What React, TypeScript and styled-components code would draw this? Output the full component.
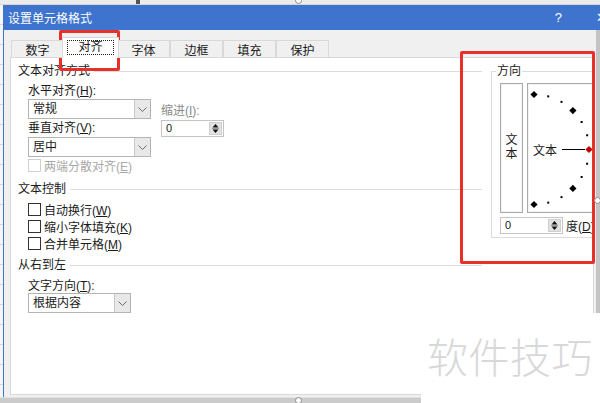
import React from 'react'
import styled, { createGlobalStyle } from 'styled-components'

const GlobalStyle = createGlobalStyle`
  html, body {
    margin: 0;
    padding: 0;
    background: #fff;
  }
  body {
    font-family: "Liberation Sans", "Noto Sans CJK SC", sans-serif;
    font-size: 12px;
    color: #1a1a1a;
  }
  * {
    box-sizing: border-box;
  }
`

const Screen = styled.div`
  position: relative;
  width: 600px;
  height: 403px;
  overflow: hidden;
  display: grid;
  grid-template-columns: 4px 596px;
  grid-template-rows: 5px 392px 6px;
  background: #e4e4e4;
`
const TopStrip = styled.div`
  grid-column: 1 / 3;
  background: linear-gradient(90deg, #ececec 0 136px, #555 136px 140px, #ececec 140px);
  border-bottom: 1px solid #d6d6d6;
`
const LeftStrip = styled.div`
  background: repeating-linear-gradient(180deg, #f6f6f6 0 19px, #d4d4d4 19px 20px);
  border-right: 1px solid #3e74cd;
`
const BottomStrip = styled.div`
  grid-column: 1 / 3;
  background: #cbcbcb;
  border-top: 1px solid #e2e2e2;
`

const Dialog = styled.div`
  display: flex;
  flex-direction: column;
  background: #f0f0f0;
  overflow: hidden;
`
const TitleBar = styled.div`
  height: 25px;
  flex: none;
  display: flex;
  align-items: center;
  padding-left: 4px;
  background: #3e74cd;
  color: #fff;
  font-size: 12px;
`
const Help = styled.span`
  margin-left: auto;
  font-size: 13px;
`
const Close = styled.span`
  margin-left: 34px;
  margin-right: -6px;
  width: 10px;
  font-size: 13px;
`

const Body = styled.div`
  flex: 1;
  display: flex;
  flex-direction: column;
  padding: 8px 2px 2px 6px;
  border-right: 4px solid #c4c4c4;
  min-height: 0;
`
const TabRow = styled.div`
  display: flex;
  align-items: flex-end;
  height: 20px;
  margin: 0 0 -1px 1px;
  position: relative;
  z-index: 1;
`
const Tab = styled.div<{ $active?: boolean }>`
  width: ${p => (p.$active ? '57px' : '53px')};
  height: ${p => (p.$active ? '21px' : '18px')};
  margin: ${p => (p.$active ? '0 -2px' : '0')};
  display: flex;
  align-items: center;
  justify-content: center;
  border: 1px solid #d9d9d9;
  border-bottom: ${p => (p.$active ? 'none' : '1px solid #d9d9d9')};
  background: ${p => (p.$active ? '#fff' : '#f0f0f0')};
  position: relative;
  z-index: ${p => (p.$active ? 2 : 1)};
  padding-bottom: ${p => (p.$active ? '2px' : '0')};
`
const Focus = styled.span`
  border: 1px dotted #222;
  padding: 0 10px;
  line-height: 13px;
`

const Panel = styled.div`
  flex: 1;
  display: grid;
  grid-template-columns: 464px 140px;
  column-gap: 9px;
  align-items: start;
  padding: 6px 0 0 7px;
  background: #fff;
  border: 1px solid #d9d9d9;
  overflow: hidden;
`
const Column = styled.div`
  display: flex;
  flex-direction: column;
`
const GroupHeader = styled.div<{ $gap?: number }>`
  display: flex;
  align-items: center;
  gap: 4px;
  height: 14px;
  line-height: 14px;
  margin-top: ${p => p.$gap ?? 0}px;
  &::after {
    content: '';
    flex: 1;
    height: 1px;
    background: #dcdcdc;
  }
`
const Indent = styled.div<{ $gap?: number }>`
  display: flex;
  flex-direction: column;
  padding-left: 10px;
  margin-top: ${p => p.$gap ?? 0}px;
`
const AlignRow = styled.div`
  display: flex;
  gap: 10px;
`
const Stack = styled.div<{ $top?: number }>`
  display: flex;
  flex-direction: column;
  padding-top: ${p => p.$top ?? 0}px;
`
const Label = styled.div<{ $gap?: number; $muted?: boolean }>`
  height: 14px;
  line-height: 14px;
  margin-top: ${p => p.$gap ?? 0}px;
  color: ${p => (p.$muted ? '#8a8a8a' : '#1a1a1a')};
  white-space: nowrap;
`

const SelectBox = styled.div<{ $w: number; $gap?: number }>`
  width: ${p => p.$w}px;
  height: 20px;
  margin-top: ${p => p.$gap ?? 0}px;
  display: flex;
  border: 1px solid #b4b4b4;
  background: #fff;
`
const SelectValue = styled.span`
  flex: 1;
  padding-left: 4px;
  line-height: 18px;
`
const SelectButton = styled.span`
  width: 16px;
  display: flex;
  align-items: center;
  justify-content: center;
  background: #e8e8e8;
  border-left: 1px solid #c8c8c8;
`

const SpinBox = styled.div<{ $w: number; $gap?: number }>`
  width: ${p => p.$w}px;
  height: 17px;
  margin-top: ${p => p.$gap ?? 0}px;
  display: flex;
  align-items: center;
  border: 1px solid #c4c4c4;
  background: #fff;
  padding: 1px;
`
const SpinValue = styled.span`
  flex: 1;
  padding-left: 3px;
  font-size: 11px;
  line-height: 13px;
`
const SpinButtons = styled.span`
  width: 13px;
  height: 13px;
  display: flex;
  align-items: center;
  justify-content: center;
  background: #e2e2e2;
  border: 1px solid #cfcfcf;
`

const Check = styled.div<{ $disabled?: boolean }>`
  display: flex;
  align-items: center;
  gap: 3px;
  height: 17px;
  color: ${p => (p.$disabled ? '#a8a8a8' : '#1a1a1a')};
  white-space: nowrap;
`
const CheckBox = styled.span<{ $disabled?: boolean }>`
  width: 13px;
  height: 13px;
  border: 1px solid ${p => (p.$disabled ? '#d0d0d0' : '#333')};
  background: #fff;
`

const Fieldset = styled.fieldset`
  margin: 0;
  padding: 5px 0 3px 8px;
  border: 1px solid #dcdcdc;
  min-width: 0;
`
const Legend = styled.legend`
  margin-left: -4px;
  padding: 0 1px;
  line-height: 14px;
  height: 14px;
`
const DialRow = styled.div`
  display: flex;
  gap: 4px;
  height: 130px;
`
const VertBox = styled.div`
  width: 23px;
  display: flex;
  flex-direction: column;
  align-items: center;
  justify-content: center;
  border: 1px solid #a9a9a9;
  box-shadow: inset 0 0 0 1px #f2f2f2;
  line-height: 14px;
  padding-bottom: 2px;
`
const DialBox = styled.div`
  width: 80px;
  border: 1px solid #a9a9a9;
  box-shadow: inset 0 0 0 1px #f2f2f2;
`
const SpinRow = styled.div`
  display: flex;
  align-items: center;
  gap: 3px;
  margin-top: 4px;
  white-space: nowrap;
`

const Highlight = styled.div<{ $x: number; $y: number; $w: number; $h: number }>`
  position: absolute;
  left: ${p => p.$x}px;
  top: ${p => p.$y}px;
  width: ${p => p.$w}px;
  height: ${p => p.$h}px;
  border: 3px solid #e8302a;
  border-radius: 2px;
  pointer-events: none;
`
const Handle = styled.span<{ $x: number; $y: number }>`
  position: absolute;
  left: ${p => p.$x - 3}px;
  top: ${p => p.$y - 3}px;
  width: 7px;
  height: 7px;
  border-radius: 50%;
  border: 1px solid #8a8a8a;
  background: #fff;
`
const Watermark = styled.div`
  position: absolute;
  left: 421px;
  top: 313px;
  right: 0;
  bottom: 0;
  background: #fff;
  padding: 22px 0 0 6px;
  font-family: "Noto Sans CJK SC", sans-serif;
  color: #d8d8d8;
  font-size: 41px;
  line-height: 41px;
  font-weight: 300;
  letter-spacing: 0.5px;
  white-space: nowrap;
`

const Chevron = () => (
  <svg width="9" height="5" viewBox="0 0 9 5">
    <polyline points="0.5,0.5 4.5,4.5 8.5,0.5" fill="none" stroke="#6a6a6a" strokeWidth="1" />
  </svg>
)

const SpinArrows = () => (
  <svg width="7" height="11" viewBox="0 0 7 11">
    <polygon points="3.5,1 6.5,4.5 0.5,4.5" fill="#111" />
    <line x1="0" y1="5.5" x2="7" y2="5.5" stroke="#9a9a9a" strokeWidth="1" />
    <polygon points="0.5,6.5 6.5,6.5 3.5,10" fill="#111" />
  </svg>
)

const Dial = () => {
  const cx = 6
  const cy = 65.5
  const r = 55
  const marks = []
  for (let a = -90; a <= 90; a += 15) {
    const rad = (a * Math.PI) / 180
    const x = cx + r * Math.cos(rad)
    const y = cy - r * Math.sin(rad)
    if (a % 45 === 0) {
      const s = 3.6
      marks.push(
        <polygon
          key={a}
          points={`${x},${y - s} ${x + s},${y} ${x},${y + s} ${x - s},${y}`}
          fill={a === 0 ? '#c00000' : '#000'}
        />
      )
    } else {
      marks.push(<rect key={a} x={x - 1} y={y - 1} width="2" height="2" fill="#000" />)
    }
  }
  return (
    <svg width="78" height="128" viewBox="0 0 78 128">
      {marks}
      <text
        x="5"
        y={cy}
        dominantBaseline="central"
        fontFamily='"Noto Sans CJK SC", sans-serif'
        fontSize="12"
        fill="#1a1a1a"
      >
        文本
      </text>
      <line x1="34" y1={cy} x2="57" y2={cy} stroke="#000" strokeWidth="1" />
    </svg>
  )
}

const Select = ({ value, width, gap }: { value: string; width: number; gap?: number }) => (
  <SelectBox $w={width} $gap={gap}>
    <SelectValue>{value}</SelectValue>
    <SelectButton>
      <Chevron />
    </SelectButton>
  </SelectBox>
)

const Spin = ({ width, gap }: { width: number; gap?: number }) => (
  <SpinBox $w={width} $gap={gap}>
    <SpinValue>0</SpinValue>
    <SpinButtons>
      <SpinArrows />
    </SpinButtons>
  </SpinBox>
)

const Option = ({ text, hotkey, disabled }: { text: string; hotkey: string; disabled?: boolean }) => (
  <Check $disabled={disabled}>
    <CheckBox $disabled={disabled} />
    <span>
      {text}(<u>{hotkey}</u>)
    </span>
  </Check>
)

const tabs = ['数字', '对齐', '字体', '边框', '填充', '保护']

export default function App() {
  return (
    <>
      <GlobalStyle />
      <Screen>
        <TopStrip />
        <LeftStrip />
        <Dialog>
          <TitleBar>
            设置单元格格式
            <Help>?</Help>
            <Close>✕</Close>
          </TitleBar>
          <Body>
            <TabRow>
              {tabs.map(t =>
                t === '对齐' ? (
                  <Tab key={t} $active>
                    <Focus>{t}</Focus>
                  </Tab>
                ) : (
                  <Tab key={t}>{t}</Tab>
                )
              )}
            </TabRow>
            <Panel>
              <Column>
                <GroupHeader>文本对齐方式</GroupHeader>
                <Indent $gap={6}>
                  <AlignRow>
                    <Stack>
                      <Label>水平对齐(<u>H</u>):</Label>
                      <Select value="常规" width={123} gap={1} />
                      <Label $gap={2}>垂直对齐(<u>V</u>):</Label>
                      <Select value="居中" width={123} gap={2} />
                      <Option text="两端分散对齐" hotkey="E" disabled />
                    </Stack>
                    <Stack $top={20}>
                      <Label $muted>缩进(<u>I</u>):</Label>
                      <Spin width={63} gap={2} />
                    </Stack>
                  </AlignRow>
                </Indent>
                <GroupHeader $gap={8}>文本控制</GroupHeader>
                <Indent $gap={5}>
                  <Option text="自动换行" hotkey="W" />
                  <Option text="缩小字体填充" hotkey="K" />
                  <Option text="合并单元格" hotkey="M" />
                </Indent>
                <GroupHeader $gap={6}>从右到左</GroupHeader>
                <Indent $gap={7}>
                  <Label>文字方向(<u>T</u>):</Label>
                  <Select value="根据内容" width={103} />
                </Indent>
              </Column>
              <Fieldset>
                <Legend>方向</Legend>
                <DialRow>
                  <VertBox>
                    <span>文</span>
                    <span>本</span>
                  </VertBox>
                  <DialBox>
                    <Dial />
                  </DialBox>
                </DialRow>
                <SpinRow>
                  <Spin width={63} />
                  <span>
                    度(<u>D</u>)
                  </span>
                </SpinRow>
              </Fieldset>
            </Panel>
          </Body>
        </Dialog>
        <BottomStrip />
        <Highlight $x={59} $y={30} $w={61} $h={41} />
        <Highlight $x={460} $y={51} $w={135} $h={213} />
        <Handle $x={298} $y={0} />
        <Handle $x={597} $y={200} />
        <Handle $x={298} $y={400} />
        <Watermark>软件技巧</Watermark>
      </Screen>
    </>
  )
}
